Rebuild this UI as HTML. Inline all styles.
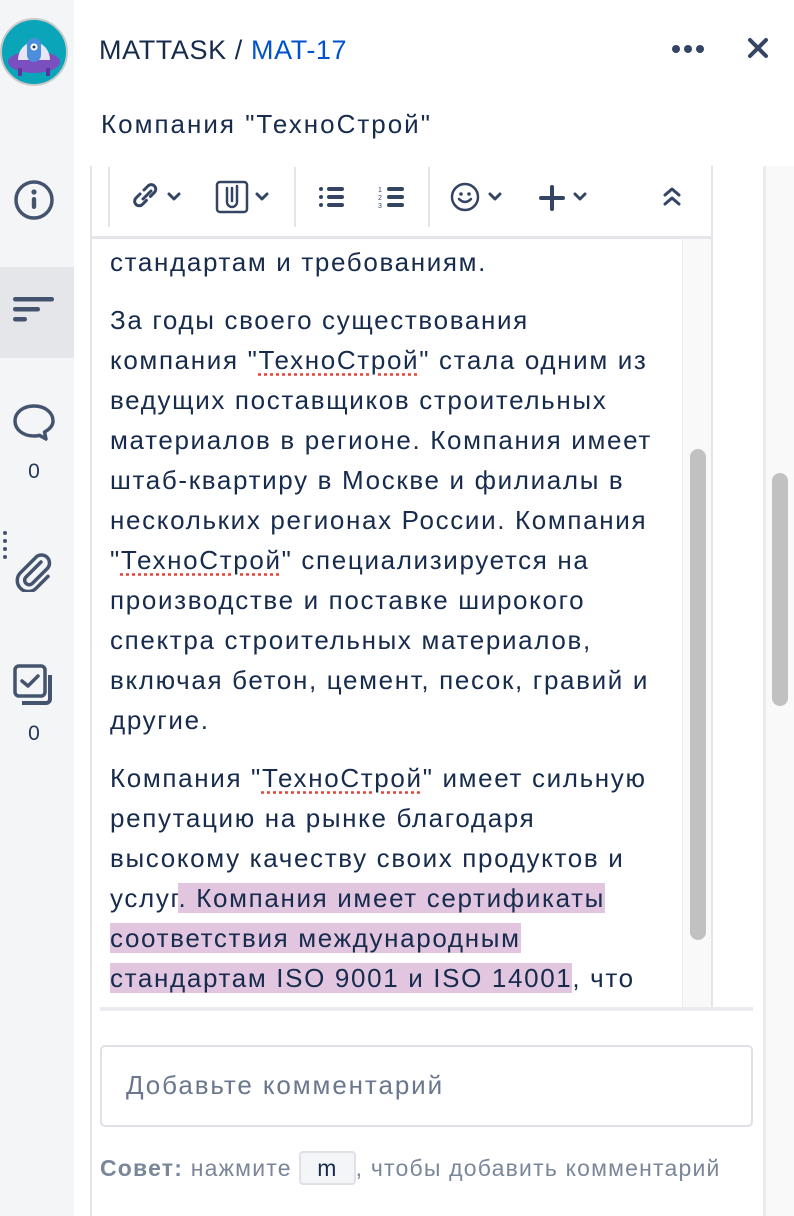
<!DOCTYPE html>
<html><head><meta charset="utf-8"><style>
*{box-sizing:border-box;margin:0;padding:0}
body{width:794px;height:1216px;overflow:hidden;background:#fff;font-family:"Liberation Sans",Arial,sans-serif;color:#172b4d;position:relative}
.side{position:absolute;left:0;top:0;width:74px;height:1216px;background:#f4f5f7}
.act{position:absolute;left:0;top:267px;width:74px;height:91px;background:#e4e6ea}
.abs{position:absolute}
.t{position:absolute;left:110px;font-size:26px;letter-spacing:1.65px;line-height:40px;white-space:nowrap;color:#172b4d}
.sp{text-decoration:underline dotted #e0453a;text-underline-offset:4px}
.hl{background:#e2c6e0}
.num{position:absolute;font-size:21px;color:#253858;width:68px;text-align:center}
</style></head><body>
<div class="side"></div><div class="act"></div>
<svg class="abs" style="left:0;top:18px" width="68" height="68" viewBox="0 0 68 68">
<circle cx="34" cy="34" r="33" fill="#0aa5b8" stroke="#c9c9c9" stroke-width="2"/>
<ellipse cx="34" cy="44" rx="26" ry="11" fill="#7b4fbf"/>
<rect x="18" y="50" width="4" height="8" fill="#5a35a0"/><rect x="46" y="50" width="4" height="8" fill="#5a35a0"/>
<path d="M18 42 a16 18 0 0 1 32 0 z" fill="#e8e6f5"/>
<rect x="27" y="20" width="14" height="24" rx="7" fill="#4d8edc"/><circle cx="34" cy="29" r="3.5" fill="#fff"/><circle cx="34" cy="29" r="1.5" fill="#253858"/>
</svg>
<svg class="abs" style="left:12px;top:178px" width="44" height="44" viewBox="0 0 44 44"><circle cx="22" cy="22" r="18" fill="none" stroke="#44546f" stroke-width="3.5"/><circle cx="22" cy="14" r="2.6" fill="#44546f"/><rect x="19.8" y="19" width="4.4" height="12" rx="2.2" fill="#44546f"/></svg>
<svg class="abs" style="left:12px;top:294px" width="44" height="36" viewBox="0 0 44 36"><rect x="1" y="3" width="41" height="4.5" rx="2.2" fill="#44546f"/><rect x="1" y="13" width="27" height="4.5" rx="2.2" fill="#44546f"/><rect x="1" y="23" width="14" height="4.5" rx="2.2" fill="#44546f"/></svg>
<svg class="abs" style="left:12px;top:402px" width="44" height="40" viewBox="0 0 44 40"><path d="M22 4C11 4 3 10.5 3 19s8 15 19 15c2 0 4-.2 5.5-.7L34 37l-1.5-7C38 27 41 23 41 19 41 10.5 33 4 22 4z" fill="none" stroke="#44546f" stroke-width="3.5" stroke-linejoin="round"/></svg>
<div class="num" style="top:460px">0</div>
<svg class="abs" style="left:2px;top:530px" width="6" height="30" viewBox="0 0 6 30"><circle cx="3" cy="3" r="2" fill="#44546f"/><circle cx="3" cy="11" r="2" fill="#44546f"/><circle cx="3" cy="19" r="2" fill="#44546f"/><circle cx="3" cy="27" r="2" fill="#44546f"/></svg>
<svg class="abs" style="left:14px;top:552px" width="40" height="40" viewBox="0 0 40 40"><path d="M27 10 12 25a4.5 4.5 0 0 0 6.4 6.4l15-15a8 8 0 0 0-11.3-11.3L6.5 20.7a11 11 0 0 0 15.6 15.6L34 24.4" fill="none" stroke="#44546f" stroke-width="3.5" stroke-linecap="round"/></svg>
<svg class="abs" style="left:12px;top:663px" width="44" height="46" viewBox="0 0 44 46"><rect x="3" y="3" width="30" height="30" rx="4" fill="none" stroke="#44546f" stroke-width="3.5"/><path d="M38 12v24a4 4 0 0 1-4 4H10" fill="none" stroke="#44546f" stroke-width="4"/><path d="M10 18l6 5 10-10" fill="none" stroke="#44546f" stroke-width="3.5" stroke-linecap="round" stroke-linejoin="round"/></svg>
<div class="num" style="top:722px">0</div>
<div class="abs" style="left:99px;top:35px;font-size:27px;letter-spacing:0.6px;color:#172b4d">MATTASK / <span style="color:#0052cc">MAT-17</span></div>
<svg class="abs" style="left:670px;top:43px" width="36" height="12"><circle cx="6" cy="6" r="4" fill="#344563"/><circle cx="18" cy="6" r="4" fill="#344563"/><circle cx="30" cy="6" r="4" fill="#344563"/></svg>
<svg class="abs" style="left:747px;top:37px" width="22" height="22"><path d="M3 3l16 16M19 3 3 19" stroke="#344563" stroke-width="4" stroke-linecap="round"/></svg>
<div class="abs" style="left:101px;top:109px;font-size:26px;letter-spacing:2px">Компания "ТехноСтрой"</div>
<div class="abs" style="left:90px;top:166px;width:2px;height:1050px;background:#e4e5e9"></div>
<div class="abs" style="left:711px;top:166px;width:2px;height:844px;background:#e4e5e9"></div>
<div class="abs" style="left:763px;top:166px;width:3px;height:1050px;background:#ebecf0"></div>
<div class="abs" style="left:766px;top:166px;width:28px;height:1050px;background:#f9f9f9"></div>
<div class="abs" style="left:772px;top:473px;width:16px;height:233px;border-radius:8px;background:#c1c1c1"></div>
<div class="abs" style="left:108px;top:167px;width:2px;height:60px;background:#e4e5e9"></div>
<div class="abs" style="left:294px;top:167px;width:2px;height:60px;background:#e4e5e9"></div>
<div class="abs" style="left:428px;top:167px;width:2px;height:60px;background:#e4e5e9"></div>
<div class="abs" style="left:92px;top:236px;width:620px;height:3px;background:#e4e5e9"></div>
<svg class="abs" style="left:130px;top:182px" width="60" height="30" viewBox="0 0 60 30"><path d="M13 17l8-8M10 12l-4 4a4.5 4.5 0 0 0 6.4 6.4l4-4M14 8l4-4a4.5 4.5 0 0 1 6.4 6.4l-4 4" fill="none" stroke="#344563" stroke-width="3" stroke-linecap="round"/><path d="M39 12l5 5 5-5" fill="none" stroke="#344563" stroke-width="3" stroke-linecap="round" stroke-linejoin="round"/></svg>
<svg class="abs" style="left:215px;top:180px" width="60" height="34" viewBox="0 0 60 34"><rect x="2" y="2" width="30" height="30" rx="3" fill="none" stroke="#344563" stroke-width="2.5"/><path d="M12 8v14a5 5 0 0 0 10 0V6M17 8v13" fill="none" stroke="#344563" stroke-width="2.5" stroke-linecap="round"/><path d="M42 14l5 5 5-5" fill="none" stroke="#344563" stroke-width="3" stroke-linecap="round" stroke-linejoin="round"/></svg>
<svg class="abs" style="left:318px;top:185px" width="28" height="24"><circle cx="3" cy="4" r="2" fill="#344563"/><circle cx="3" cy="12" r="2" fill="#344563"/><circle cx="3" cy="20" r="2" fill="#344563"/><rect x="9" y="2" width="17" height="4" rx="2" fill="#344563"/><rect x="9" y="10" width="17" height="4" rx="2" fill="#344563"/><rect x="9" y="18" width="17" height="4" rx="2" fill="#344563"/></svg>
<svg class="abs" style="left:378px;top:185px" width="28" height="24"><text x="0" y="7" font-size="7" fill="#344563" font-family="Liberation Sans">1</text><text x="0" y="15" font-size="7" fill="#344563" font-family="Liberation Sans">2</text><text x="0" y="23" font-size="7" fill="#344563" font-family="Liberation Sans">3</text><rect x="9" y="2" width="17" height="4" rx="2" fill="#344563"/><rect x="9" y="10" width="17" height="4" rx="2" fill="#344563"/><rect x="9" y="18" width="17" height="4" rx="2" fill="#344563"/></svg>
<svg class="abs" style="left:450px;top:182px" width="60" height="30" viewBox="0 0 60 30"><circle cx="15" cy="15" r="13" fill="none" stroke="#344563" stroke-width="2.5"/><circle cx="11" cy="12" r="1.8" fill="#344563"/><circle cx="19" cy="12" r="1.8" fill="#344563"/><path d="M9 17q6 6 12 0" fill="none" stroke="#344563" stroke-width="2.5" stroke-linecap="round"/><path d="M40 12l5 5 5-5" fill="none" stroke="#344563" stroke-width="3" stroke-linecap="round" stroke-linejoin="round"/></svg>
<svg class="abs" style="left:538px;top:184px" width="60" height="28" viewBox="0 0 60 28"><path d="M14 3v22M3 14h22" stroke="#344563" stroke-width="4" stroke-linecap="round"/><path d="M37 10l5 5 5-5" fill="none" stroke="#344563" stroke-width="3" stroke-linecap="round" stroke-linejoin="round"/></svg>
<svg class="abs" style="left:662px;top:186px" width="20" height="22"><path d="M3 9l7-6 7 6M3 18l7-6 7 6" fill="none" stroke="#344563" stroke-width="3" stroke-linecap="round" stroke-linejoin="round"/></svg>
<div class="abs" style="left:682px;top:239px;width:29px;height:771px;background:#f9f9f9;border-left:1px solid #eee"></div>
<div class="abs" style="left:690px;top:449px;width:16px;height:491px;border-radius:8px;background:#c1c1c1"></div>
<div class="t" style="top:242px">стандартам и требованиям.</div>
<div class="t" style="top:300px">За годы своего существования</div>
<div class="t" style="top:340px">компания "<span class="sp">ТехноСтрой</span>" стала одним из</div>
<div class="t" style="top:380px">ведущих поставщиков строительных</div>
<div class="t" style="top:420px">материалов в регионе. Компания имеет</div>
<div class="t" style="top:460px">штаб-квартиру в Москве и филиалы в</div>
<div class="t" style="top:500px">нескольких регионах России. Компания</div>
<div class="t" style="top:540px">"<span class="sp">ТехноСтрой</span>" специализируется на</div>
<div class="t" style="top:580px">производстве и поставке широкого</div>
<div class="t" style="top:620px">спектра строительных материалов,</div>
<div class="t" style="top:660px">включая бетон, цемент, песок, гравий и</div>
<div class="t" style="top:700px">другие.</div>
<div class="t" style="top:758px">Компания "<span class="sp">ТехноСтрой</span>" имеет сильную</div>
<div class="t" style="top:798px">репутацию на рынке благодаря</div>
<div class="t" style="top:838px">высокому качеству своих продуктов и</div>
<div class="t" style="top:878px">услуг<span class="hl">. Компания имеет сертификаты </span></div>
<div class="t" style="top:918px"><span class="hl">соответствия международным </span></div>
<div class="t" style="top:958px"><span class="hl">стандартам ISO 9001 и ISO 14001</span>, что</div>
<div class="abs" style="left:92px;top:998px;width:590px;height:10px;background:#fff"></div>
<div class="abs" style="left:100px;top:1007px;width:653px;height:4px;background:#ebecf0"></div>
<div class="abs" style="left:100px;top:1045px;width:653px;height:82px;border:2px solid #dfe1e6;border-radius:5px"></div>
<div class="abs" style="left:126px;top:1070px;font-size:26px;letter-spacing:1.9px;color:#6b778c">Добавьте комментарий</div>
<div class="abs" style="left:100px;top:1151px;font-size:23px;letter-spacing:1.2px;color:#7a869a;white-space:nowrap"><b>Совет:</b> нажмите <span style="display:inline-block;border:2px solid #dfe1e6;border-radius:4px;padding:0 16px;background:#f4f5f7;color:#172b4d;line-height:30px">m</span>, чтобы добавить комментарий</div>
</body></html>
